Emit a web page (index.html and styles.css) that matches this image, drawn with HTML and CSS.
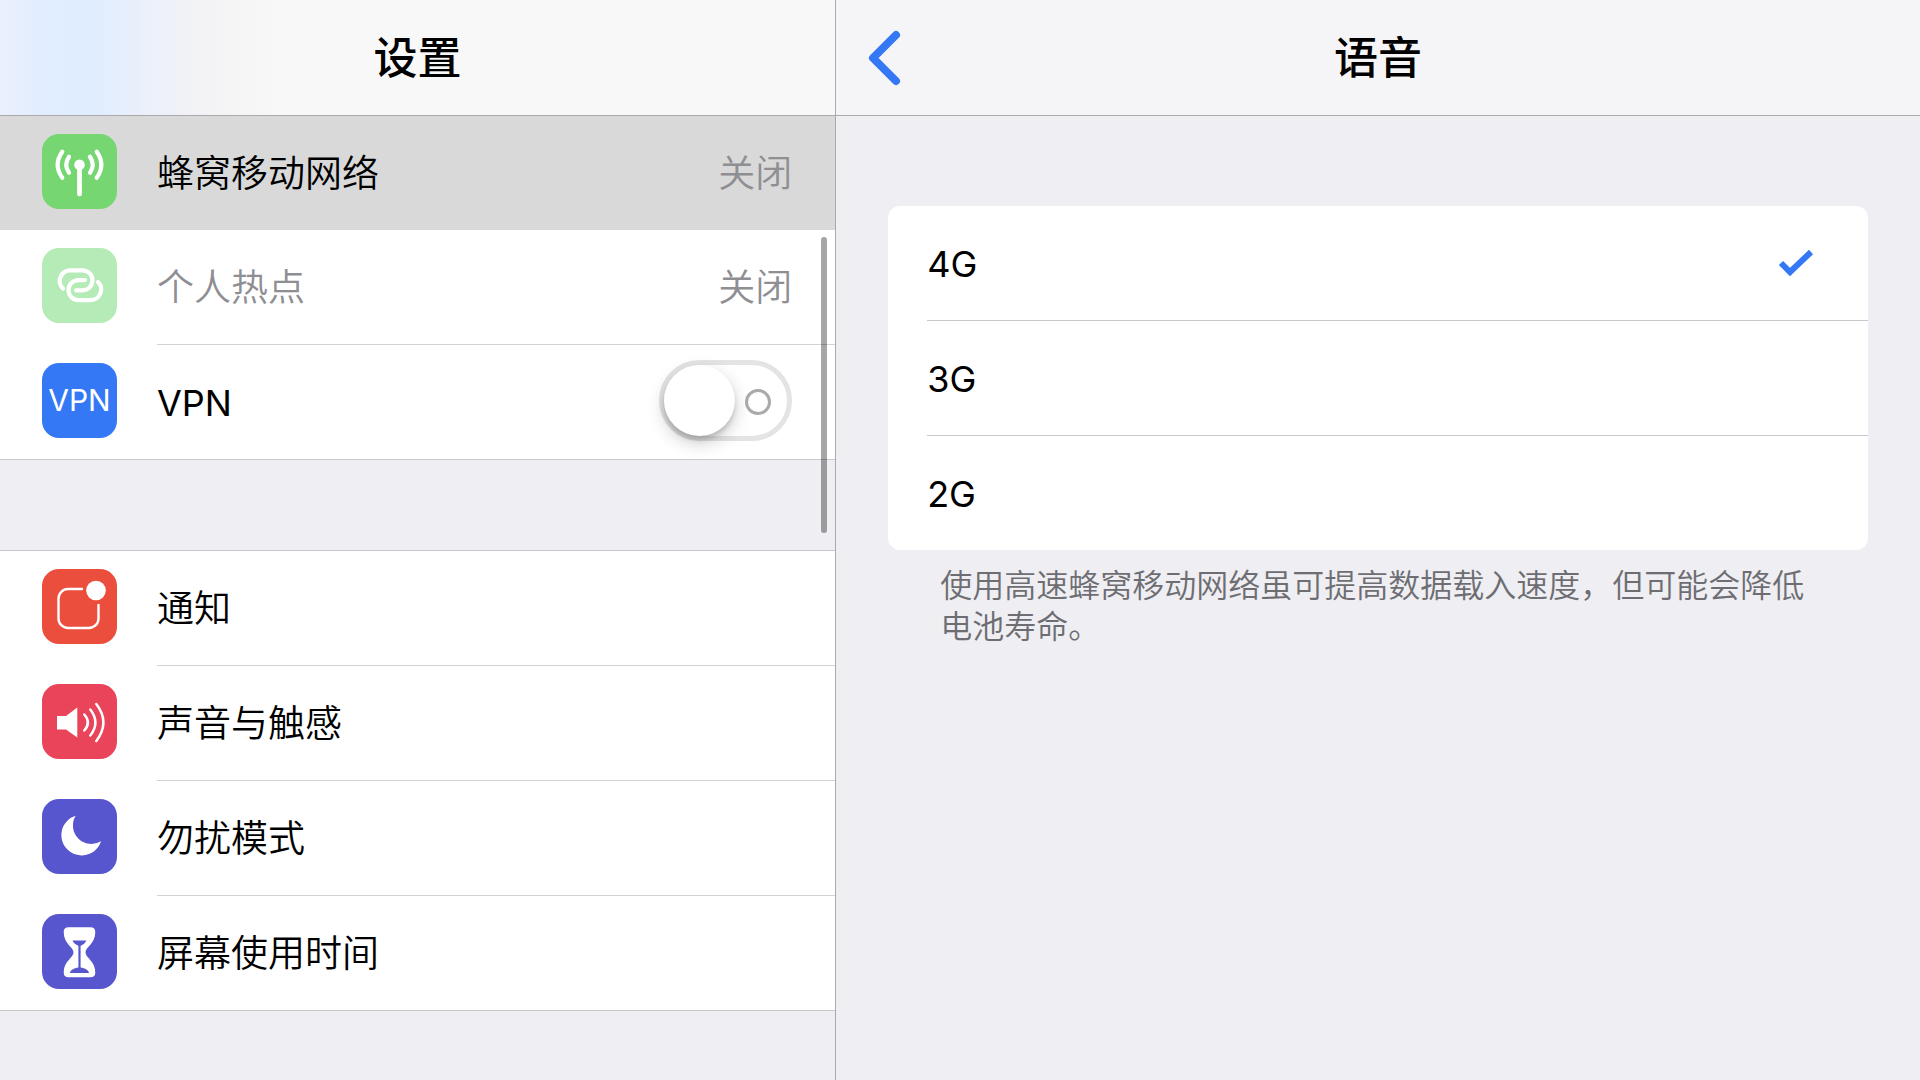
FILE: index.html
```html
<!doctype html>
<html lang="zh-CN">
<head>
<meta charset="utf-8">
<title>设置</title>
<link rel="stylesheet" href="styles.css">
</head>
<body>
<aside class="sidebar">
  <header class="bar bar-tinted"><h1>设置</h1></header>
  <nav>
    <div class="group group-first">
      <a class="row selected" href="#cellular">
        <svg class="icon green" viewBox="0 0 75 75">
          <g class="line" stroke-width="4.2">
            <path d="M37.5 32V60" stroke-width="4.8"/>
            <path d="M48 22.7Q53.5 30.7 48 38.7M27 22.7Q21.5 30.7 27 38.7"/>
            <path d="M54.7 17.7Q64 30.7 54.7 43.7M20.3 17.7Q11 30.7 20.3 43.7"/>
          </g>
          <circle class="fill" cx="37.5" cy="30.7" r="5.3"/>
        </svg>
        <span class="text"><span class="name">蜂窝移动网络</span><span class="value">关闭</span></span>
      </a>
      <a class="row dimmed" href="#hotspot">
        <svg class="icon pale" viewBox="0 0 75 75">
          <g class="line" stroke-width="4.2">
            <path d="M21 40.5A10.6 10.6 0 0 1 28.5 22.3H40.5A10 10 0 0 1 40.5 42.3H34"/>
            <path d="M56 34A10.6 10.6 0 0 1 48.5 52.1H36.5A10 10 0 0 1 36.5 32.1H43"/>
          </g>
        </svg>
        <span class="text"><span class="name">个人热点</span><span class="value">关闭</span></span>
      </a>
      <div class="row">
        <span class="icon blue">VPN</span>
        <span class="text"><label class="name latin" for="vpn">VPN</label><input class="switch" id="vpn" type="checkbox"></span>
      </div>
    </div>
    <div class="group">
      <a class="row" href="#notifications">
        <svg class="icon orange" viewBox="0 0 75 75">
          <path class="line" stroke-width="2.4" d="M40 20H26A9.5 9.5 0 0 0 16.5 29.5V49.5A9.5 9.5 0 0 0 26 59H47A9.5 9.5 0 0 0 56.5 49.5V36"/>
          <circle class="fill" cx="54" cy="21.5" r="9.8"/>
        </svg>
        <span class="text"><span class="name">通知</span></span>
      </a>
      <a class="row" href="#sounds">
        <svg class="icon pink" viewBox="0 0 75 75">
          <path class="fill" d="M15 32H24L35.3 23.5V53.5L24 45.5H15Z"/>
          <path class="line" stroke-width="2.5" d="M42.3 30.5Q49.5 38.5 42.3 46.5M48.3 25.5Q58.5 38.5 48.3 51.5M54.3 20Q68.5 38.5 54.3 57"/>
        </svg>
        <span class="text"><span class="name">声音与触感</span></span>
      </a>
      <a class="row" href="#dnd">
        <svg class="icon indigo" viewBox="0 0 75 75">
          <path class="fill" d="M33.7 16.7A20.3 20.3 0 1 0 59 42.3A18.5 18.5 0 0 1 33.7 16.7Z"/>
        </svg>
        <span class="text"><span class="name">勿扰模式</span></span>
      </a>
      <a class="row" href="#screentime">
        <svg class="icon indigo" viewBox="0 0 75 75">
          <path class="fill" d="M26.5 13.3H48.5Q53.3 13.3 53.3 18C53.3 30 43.5 33 43.5 38.3C43.5 44 53.3 47 53.3 58.5Q53.3 63.3 48.5 63.3H26.5Q21.7 63.3 21.7 58.5C21.7 47 31.5 44 31.5 38.3C31.5 33 21.7 30 21.7 18Q21.7 13.3 26.5 13.3Z"/>
          <path class="sand" d="M30.5 26.5H44.5Q43 30 38.6 31.8V53.5C43 54 47 56.5 47 59H28C28 56.5 32 54 36.4 53.5V31.8Q32 30 30.5 26.5Z"/>
        </svg>
        <span class="text"><span class="name">屏幕使用时间</span></span>
      </a>
    </div>
  </nav>
  <div class="scrollbar"></div>
</aside>
<main class="detail">
  <header class="bar">
    <button class="back" type="button" aria-label="返回">
      <svg width="33" height="56" viewBox="0 0 33 56"><path d="M28 5L5 28L28 51"/></svg>
    </button>
    <h1>语音</h1>
  </header>
  <div class="card">
    <label class="option latin" for="g4"><span>4G</span><input id="g4" type="radio" name="voice" checked>
      <svg class="check" width="36" height="28" viewBox="0 0 36 28"><path d="M3 14L12 23L33 3"/></svg>
    </label>
    <label class="option latin" for="g3"><span>3G</span><input id="g3" type="radio" name="voice">
      <svg class="check" width="36" height="28" viewBox="0 0 36 28"><path d="M3 14L12 23L33 3"/></svg>
    </label>
    <label class="option latin" for="g2"><span>2G</span><input id="g2" type="radio" name="voice">
      <svg class="check" width="36" height="28" viewBox="0 0 36 28"><path d="M3 14L12 23L33 3"/></svg>
    </label>
  </div>
  <p class="note">使用高速蜂窝移动网络虽可提高数据载入速度，但可能会降低电池寿命。</p>
</main>
</body>
</html>
```
FILE: styles.css
```css
* { box-sizing: border-box; }
body {
  margin: 0;
  min-height: 100vh;
  display: grid;
  grid-template-columns: 43.55% 1fr;
  background: #eeeef3;
  color: #000;
  font-family: Inter, "Noto Sans CJK SC", sans-serif;
  font-size: 37px;
  font-weight: 350;
  line-height: 56px;
}
a { color: inherit; text-decoration: none; }
.latin { font-size: 36px; font-weight: 400; }
.sidebar {
  position: relative;
  border-right: 1px solid #a9a9ae;
}
.bar {
  position: relative;
  display: flex;
  align-items: center;
  justify-content: center;
  height: 116px;
  background: #f5f5f7;
  border-bottom: 1px solid #a9a9ae;
}
.bar-tinted {
  background: linear-gradient(90deg, #ebf0fc 0, #e2eeff 36px, #e0edff 95px, #ebf0fa 145px, #f3f3f5 205px, #f8f8f8 280px);
}
h1 {
  margin: 0;
  font-size: 44px;
  font-weight: 500;
}

/* sidebar list */
.group {
  margin-top: 90px;
  background: #fff;
  border-top: 1px solid #c8c8cc;
  border-bottom: 1px solid #c8c8cc;
}
.group-first { margin-top: 0; border-top: 0; }
.row {
  display: flex;
  align-items: center;
  padding-left: 42px;
}
.selected { background: #d9d9d9; }
.dimmed { color: #8e8e93; }
.icon {
  width: 75px;
  height: 75px;
  margin: 0 40px 4px 0;
  border-radius: 17px;
}
.green { background: #76d672; }
.pale { background: #b5ebb6; }
.blue {
  background: #3478f6;
  color: #fff;
  font-size: 30px;
  font-weight: 400;
  line-height: 75px;
  text-align: center;
}
.orange { background: #eb4e3d; }
.pink { background: #e9445a; }
.indigo { background: #5856ce; }
.line { fill: none; stroke: #fff; stroke-linecap: round; }
.fill { fill: #fff; }
.sand { fill: #5856ce; }
.text {
  flex: 1;
  display: flex;
  align-items: center;
  justify-content: space-between;
  height: 114px;
  padding-right: 43px;
}
.row:not(.selected):not(:last-child) .text {
  height: 115px;
  border-bottom: 1px solid #d2d2d5;
}
.name, .value, .option span { padding-top: 2px; }
.value { color: #8e8e93; }
.switch {
  appearance: none;
  position: relative;
  width: 133px;
  height: 81px;
  margin: 0 0 4px;
  border: 5px solid #e4e4e5;
  border-radius: 41px;
  background: #fff;
}
.switch::before {
  content: "";
  position: absolute;
  top: 0;
  left: 0;
  width: 71px;
  height: 71px;
  border-radius: 50%;
  background: #fff;
  box-shadow: 0 7px 18px rgba(0, 0, 0, .2), 0 4px 4px rgba(0, 0, 0, .14);
}
.switch::after {
  content: "";
  position: absolute;
  top: 24px;
  right: 16px;
  width: 20px;
  height: 20px;
  border: 3px solid #aaa;
  border-radius: 50%;
}
.scrollbar {
  position: absolute;
  top: 237px;
  right: 8px;
  width: 6px;
  height: 296px;
  border-radius: 3px;
  background: rgba(0, 0, 0, .35);
}

/* detail pane */
.back {
  position: absolute;
  left: 32px;
  top: 30px;
  padding: 0;
  border: 0;
  background: none;
  line-height: 0;
}
.back path {
  fill: none;
  stroke: #3478f6;
  stroke-width: 8;
  stroke-linecap: round;
  stroke-linejoin: round;
}
.card {
  margin: 90px 52px 0;
  padding-left: 39px;
  background: #fff;
  border-radius: 12px;
}
.option {
  display: flex;
  align-items: center;
  justify-content: space-between;
  height: 115px;
  padding-right: 54px;
  border-bottom: 1px solid #c8c8cc;
}
.option:last-child { height: 114px; border-bottom: 0; }
.option input { appearance: none; width: 0; margin: 0; }
.check { visibility: hidden; }
input:checked + .check { visibility: visible; }
.check path { fill: none; stroke: #3478f6; stroke-width: 6; }
.note {
  margin: 15px 104px 0;
  color: #6d6d72;
  font-size: 32px;
  line-height: 41px;
}
```
